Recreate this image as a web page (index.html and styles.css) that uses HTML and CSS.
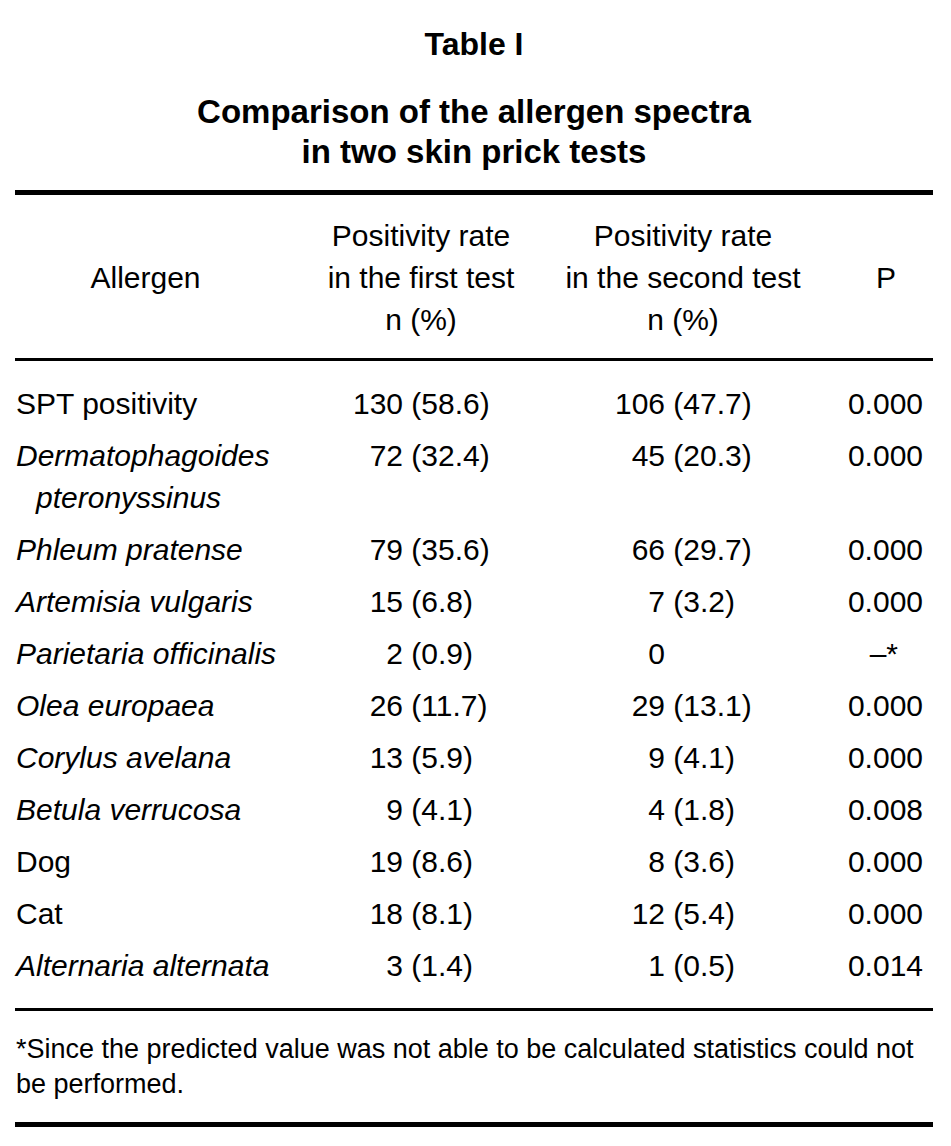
FILE: index.html
```html
<!DOCTYPE html>
<html lang="en">
<head>
<meta charset="utf-8">
<title>Table I</title>
<link rel="stylesheet" href="styles.css">
</head>
<body>
<div class="page">
  <h1 class="label">Table I</h1>
  <h2 class="caption">Comparison of the allergen spectra<br>in two skin prick tests</h2>
  <table class="data">
    <colgroup>
      <col class="c1"><col class="c2"><col class="c3"><col class="c4">
    </colgroup>
    <thead>
      <tr>
        <th class="h-allergen">Allergen</th>
        <th>Positivity rate<br>in the first test<br>n (%)</th>
        <th>Positivity rate<br>in the second test<br>n (%)</th>
        <th class="h-p">P</th>
      </tr>
    </thead>
    <tbody>
      <tr><td class="name">SPT positivity</td><td class="v1"><span class="n">130</span> (58.6)</td><td class="v2"><span class="n">106</span> (47.7)</td><td class="p">0.000</td></tr>
      <tr><td class="name sp">Dermatophagoides<br>pteronyssinus</td><td class="v1"><span class="n">72</span> (32.4)</td><td class="v2"><span class="n">45</span> (20.3)</td><td class="p">0.000</td></tr>
      <tr><td class="name sp">Phleum pratense</td><td class="v1"><span class="n">79</span> (35.6)</td><td class="v2"><span class="n">66</span> (29.7)</td><td class="p">0.000</td></tr>
      <tr><td class="name sp">Artemisia vulgaris</td><td class="v1"><span class="n">15</span> (6.8)</td><td class="v2"><span class="n">7</span> (3.2)</td><td class="p">0.000</td></tr>
      <tr><td class="name sp">Parietaria officinalis</td><td class="v1"><span class="n">2</span> (0.9)</td><td class="v2"><span class="n">0</span></td><td class="p na">–*</td></tr>
      <tr><td class="name sp">Olea europaea</td><td class="v1"><span class="n">26</span> (11.7)</td><td class="v2"><span class="n">29</span> (13.1)</td><td class="p">0.000</td></tr>
      <tr><td class="name sp">Corylus avelana</td><td class="v1"><span class="n">13</span> (5.9)</td><td class="v2"><span class="n">9</span> (4.1)</td><td class="p">0.000</td></tr>
      <tr><td class="name sp">Betula verrucosa</td><td class="v1"><span class="n">9</span> (4.1)</td><td class="v2"><span class="n">4</span> (1.8)</td><td class="p">0.008</td></tr>
      <tr><td class="name">Dog</td><td class="v1"><span class="n">19</span> (8.6)</td><td class="v2"><span class="n">8</span> (3.6)</td><td class="p">0.000</td></tr>
      <tr><td class="name">Cat</td><td class="v1"><span class="n">18</span> (8.1)</td><td class="v2"><span class="n">12</span> (5.4)</td><td class="p">0.000</td></tr>
      <tr><td class="name sp">Alternaria alternata</td><td class="v1"><span class="n">3</span> (1.4)</td><td class="v2"><span class="n">1</span> (0.5)</td><td class="p">0.014</td></tr>
    </tbody>
  </table>
  <p class="note">*Since the predicted value was not able to be calculated statistics could not be performed.</p>
</div>
</body>
</html>
```
FILE: styles.css
```css
html, body {
  margin: 0;
  padding: 0;
  background: #fff;
}
body {
  font-family: "Liberation Sans", Arial, sans-serif;
  color: #000;
}
.page {
  width: 918px;
  margin: 0 0 0 15px;
}
.label {
  margin: 24px 0 0;
  font-size: 32px;
  line-height: 40px;
  font-weight: bold;
  text-align: center;
}
.caption {
  margin: 28px 0 0;
  font-size: 33px;
  line-height: 40px;
  font-weight: bold;
  text-align: center;
}
.data {
  margin-top: 18px;
  width: 918px;
  border-collapse: collapse;
  table-layout: fixed;
  font-size: 30px;
  line-height: 42px;
}
.c1 { width: 275px; }
.c2 { width: 262px; }
.c3 { width: 262px; }
.c4 { width: 119px; }
.data thead th {
  font-weight: normal;
  text-align: center;
  vertical-align: middle;
  white-space: nowrap;
  padding: 20px 0 17px;
  border-top: 5px solid #000;
  border-bottom: 3px solid #000;
}
.data thead th.h-allergen {
  padding-right: 14px;
}
.data thead th.h-p {
  padding-left: 25px;
}
.data td {
  padding: 5px 0;
  vertical-align: top;
  white-space: nowrap;
}
.data tbody tr:first-child td { padding-top: 22px; }
.data tbody tr:last-child td { padding-bottom: 21px; }
.data td.name {
  padding-left: 21px;
  text-indent: -20px;
}
.data td.sp { font-style: italic; }
.n {
  display: inline-block;
  width: 50px;
  text-align: right;
  text-indent: 0;
}
.data td.v1 { padding-left: 63px; }
.data td.v2 { padding-left: 63px; }
.data td.p {
  text-align: right;
  padding-right: 10px;
}
.data td.p.na { padding-right: 35px; }
.note {
  margin: 0;
  border-top: 3px solid #000;
  border-bottom: 5px solid #000;
  padding: 21px 0 20px 1px;
  font-size: 27px;
  line-height: 35px;
}
```
